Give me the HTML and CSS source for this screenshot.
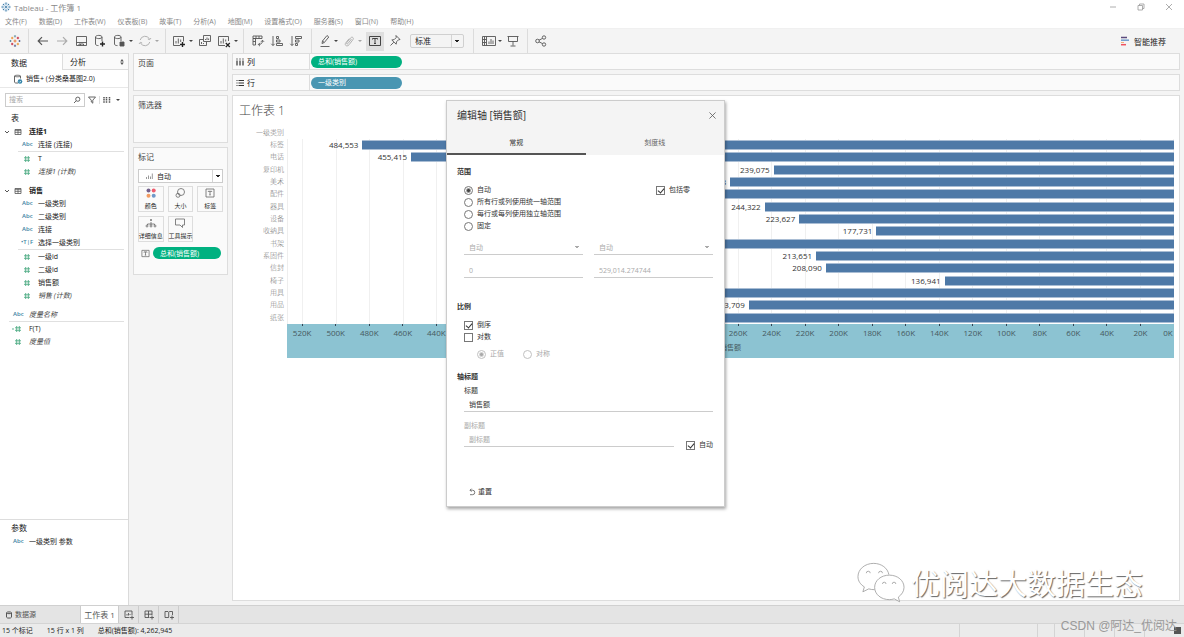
FILE: index.html
```html
<!DOCTYPE html>
<html lang="zh-CN">
<head>
<meta charset="utf-8">
<title>Tableau - 工作簿 1</title>
<link rel="stylesheet" href="styles.css">
</head>
<body>
<svg class="defs" aria-hidden="true">
  <symbol id="i-hash" viewBox="0 0 8 8"><path d="M2.7 1v6M5.3 1v6M1 2.8h6M1 5.3h6"/></symbol>
  <symbol id="i-table" viewBox="0 0 8 8"><path d="M1 1.5h6v5H1zM1 2.3h6M1 4.300h6M4 2v4.5" stroke-width=".8"/></symbol>
  <symbol id="i-chev" viewBox="0 0 8 8"><path d="M2 3l2 2 2-2"/></symbol>
  <symbol id="i-label" viewBox="0 0 10 10"><path d="M1 1.5h8v7H1zM3.3 4V3.2h3.4V4M5 3.2v3.6M4.2 6.8h1.6"/></symbol>
  <symbol id="i-cyl" viewBox="0 0 14 14"><path d="M2.5 3v7c0 1 1.2 1.6 3 1.6M9 3v4M2.500 3c0-1 1.500-1.600 3.300-1.600S9 2 9 3s-1.500 1.600-3.200 1.600S2.500 4 2.500 3z"/></symbol>
</svg>
<header class="titlebar">
  <svg class="ic10" viewBox="0 0 10 10"><circle cx="5" cy="5" r="4.500" fill="#dbe8f2"/><path d="M5 .5v2M5 7.500v2M.5 5h2M7.500 5h2M5 4v2M4 5h2M2 2l1.200 1.200M8 2L6.800 3.200M2 8l1.200-1.200M8 8L6.800 6.800" stroke="#3f7ca8" fill="none"/></svg>
  <h1>Tableau - 工作簿 1</h1>
  <div class="winbtns">
    <button aria-label="最小化"><svg viewBox="0 0 8 8"><path d="M1 4h6"/></svg></button>
    <button aria-label="还原"><svg viewBox="0 0 8 8"><path d="M1 2.500h4.500V7H1zM2.500 2.500V1H7v4.500H5.500"/></svg></button>
    <button aria-label="关闭"><svg viewBox="0 0 8 8"><path d="M1 1l6 6M7 1L1 7"/></svg></button>
  </div>
</header>
<nav class="menubar">
  <button>文件(F)</button><button>数据(D)</button><button>工作表(W)</button><button>仪表板(B)</button><button>故事(T)</button><button>分析(A)</button><button>地图(M)</button><button>设置格式(O)</button><button>服务器(S)</button><button>窗口(N)</button><button>帮助(H)</button>
</nav>
<div class="toolbar">
  <div class="group g1"><button class="tb" aria-label="开始页面"><svg viewBox="0 0 14 14"><path d="M7 5.500v3M5.500 7h3" stroke="#e8762c"/><path d="M7 1v2.500M5.900 2.200h2.200" stroke="#7199a6"/><path d="M7 10.500V13M5.900 11.800h2.200" stroke="#5b6591"/><path d="M1.500 7h2M2.500 6v2" stroke="#5b879b"/><path d="M10.500 7h2M11.500 6v2" stroke="#5b6591"/><path d="M3 4h2.400M4.200 2.800v2.400M8.700 10h2.400M9.900 8.800v2.400" stroke="#eb912c"/><path d="M8.700 4h2.400M9.900 2.800v2.400M3 10h2.400M4.200 8.800v2.400" stroke="#c72035"/></svg></button></div>
  <div class="group g2">
    <button class="tb" aria-label="撤消"><svg viewBox="0 0 14 14"><path d="M12 7H2.300M6 3.200L2.200 7 6 10.800" stroke-width="1.200"/></svg></button>
    <button class="tb off" aria-label="重做"><svg viewBox="0 0 14 14"><path d="M2 7h9.700M8 3.200L11.800 7 8 10.800" stroke-width="1.200"/></svg></button>
    <button class="tb" aria-label="保存"><svg viewBox="0 0 14 14"><path d="M2.500 2.500h10v9h-10zM2.500 8.500h10M5 11.500V10h4.500v1.500M6.500 10v1.500"/></svg></button>
    <button class="tb" aria-label="新建数据源"><svg viewBox="0 0 14 14"><use href="#i-cyl"/><path d="M9.500 7.500v5M7 10h5" stroke="#222" stroke-width="1.400"/></svg></button>
    <button class="tb" aria-label="暂停自动更新"><svg viewBox="0 0 14 14"><use href="#i-cyl"/><path d="M8 8h4v4H8z" fill="#555"/></svg></button>
    <button class="caret" aria-label="更多"></button>
    <button class="tb off" aria-label="运行更新"><svg viewBox="0 0 14 14"><path d="M2.200 6A5 5 0 0 1 11.500 5M11.800 8A5 5 0 0 1 2.500 9M13 4l-1.300 1.700L9.800 5M1 10l1.300-1.700L4.200 9"/></svg></button>
    <button class="caret off" aria-label="更多"></button>
  </div>
  <div class="group g3">
    <button class="tb" aria-label="新建工作表"><svg viewBox="0 0 14 14"><path d="M8 11.500H1.500v-9h10v5M4 9.500V7M6.300 9.500V4.500M8.700 8V5.500"/><path d="M10.500 8v5M8 10.500h5" stroke="#222" stroke-width="1.400"/></svg></button>
    <button class="caret" aria-label="更多"></button>
    <button class="tb" aria-label="复制"><svg viewBox="0 0 14 14"><path d="M5.500 1.500h7v6h-7zM5 5.500H1.500v6h7V8M3.500 10V8M5.500 10V9M7.500 6V5M9 6V3.500M10.600 6V4.500"/></svg></button>
    <button class="tb" aria-label="清除工作表"><svg viewBox="0 0 14 14"><path d="M8 11.500H1.500v-9h10v4.500M4 9.500V7M6.300 9.500V4.500M8.700 7.500V5.500"/><path d="M8.800 9l4 4M12.800 9l-4 4" stroke="#222" stroke-width="1.200"/></svg></button>
    <button class="caret" aria-label="更多"></button>
  </div>
  <div class="group g4">
    <button class="tb" aria-label="交换行和列"><svg viewBox="0 0 14 14"><path d="M2 2h9v2.500H2zM2 4.500h2.500V11H2zM5 2v2.500M8 2v2.500M2 7.500h2.500M11.500 6.500c0 2.800-1.500 4-4 4M9 8.800L7.300 10.500 9 12.200M10 7.800l1.500-1.600L13 7.800"/></svg></button>
    <button class="tb" aria-label="升序排序"><svg viewBox="0 0 14 14"><path d="M3 2v9.500M1.300 9.800L3 11.500l1.700-1.700M6.500 2.500h2v2h-2zM6.500 6h3.500v2H6.500zM6.500 9.500h6v2h-6z"/></svg></button>
    <button class="tb" aria-label="降序排序"><svg viewBox="0 0 14 14"><path d="M3 2v9.500M1.300 9.800L3 11.500l1.700-1.700M6.500 2.500h6v2h-6zM6.500 6h3.500v2H6.500zM6.500 9.500h2v2h-2z"/></svg></button>
  </div>
  <div class="group g5">
    <button class="tb" aria-label="突出显示"><svg viewBox="0 0 14 14"><path d="M4 9.500L4.500 7l4.500-5.500 1.800 1.500-4.500 5.500zM4.500 7l1.800 1.500M2.500 12.500h9"/></svg></button>
    <button class="caret" aria-label="更多"></button>
    <button class="tb off" aria-label="分组成员"><svg viewBox="0 0 14 14"><path d="M9.500 5L6 9.500c-.8 1-2 .2-1.300-.8L8.500 4c1.500-1.800 3.800-.2 2.400 1.700L7 10.800c-2 2.500-5 .3-3.200-2L7 4.800"/></svg></button>
    <button class="caret off" aria-label="更多"></button>
    <button class="tb on" aria-label="显示标记标签"><svg viewBox="0 0 14 14"><path d="M1.500 2.500h11v9h-11zM4.500 5.500v-1h5v1M7 4.500v5M6 9.500h2"/></svg></button>
    <button class="tb" aria-label="修复轴"><svg viewBox="0 0 14 14"><path d="M8 1.500l4 4-1.500.3-2 2-.3 2.400L3.800 6l2.400-.4 2-2zM5.800 8.200L2.500 11.500"/></svg></button>
    <select class="fit" aria-label="适合"><option>标准</option></select>
  </div>
  <div class="group g6">
    <button class="tb" aria-label="显示卡"><svg viewBox="0 0 14 14"><path d="M.5 2.500h13v9H.5zM.5 5.500h4M.5 8.500h4M4.500 2.500v9M2.500 2.500v9M7 10V7.500M9 10V5M11 10V6.500"/></svg></button>
    <button class="caret" aria-label="更多"></button>
    <button class="tb" aria-label="演示模式"><svg viewBox="0 0 14 14"><path d="M1.500 2.500h11M2.500 2.500v5h9v-5M7 7.500v4M4.500 12h5"/></svg></button>
  </div>
  <div class="group g7"><button class="tb" aria-label="共享"><svg viewBox="0 0 14 14"><circle cx="3.500" cy="7" r="1.800"/><circle cx="10" cy="3.500" r="1.700"/><circle cx="10" cy="10.500" r="1.700"/><path d="M5 6.200l3.500-1.800M5 7.800l3.500 1.800"/></svg></button></div>
  <button class="showme"><svg viewBox="0 0 10 10"><path d="M1 1.500h6" stroke="#5b4a7d" stroke-width="1.500"/><path d="M1 4.200h8" stroke="#6f9bcd" stroke-width="1.500"/><path d="M1 6.500h3" stroke="#f2b07c"/><path d="M1 8.700h5" stroke="#ef5360" stroke-width="1.500"/></svg>智能推荐</button>
</div>
<main class="workspace">
  <aside class="datapane">
    <div class="ptabs"><button class="ptab sel">数据</button><button class="ptab">分析<svg class="spin" viewBox="0 0 4 6"><path d="M2 0l1.800 2.400H.2zM2 6l1.800-2.400H.2z"/></svg></button></div>
    <button class="source"><svg class="ic10" viewBox="0 0 10 10"><path d="M5 9H3C2 9 1.500 8.500 1.500 8V2M7.500 2v2.500M1.500 2C1.500 1 7.500 1 7.500 2S1.500 3 1.500 2z" fill="none" stroke="#666"/><circle cx="7" cy="7.500" r="2.300" fill="#3183a8"/><path d="M6 7.500l.8.8 1.300-1.500" fill="none" stroke="#fff" stroke-width=".7"/></svg>销售+ (分类桑基图2.0)</button>
    <div class="searchrow">
      <label class="search"><input type="text" placeholder="搜索" aria-label="搜索"><svg viewBox="0 0 8 8"><circle cx="4.800" cy="3.200" r="2.100"/><path d="M3.300 4.700L1 7"/></svg></label>
      <button aria-label="筛选"><svg viewBox="0 0 8 8"><path d="M.5 1h7L4.800 4.200V7.200L3.300 6V4.200z"/></svg></button>
      <button class="viewbtn" aria-label="查看"><svg viewBox="0 0 8 8"><path d="M1 1v6M3.500 1v6M6.500 1v6" stroke-width="1.500" stroke-dasharray="1.500 .6"/></svg></button>
      <button class="caret" aria-label="更多"></button>
    </div>
    <div class="tree">
      <h2>表</h2>
      <div class="node top"><svg class="tw"><use href="#i-chev"/></svg><svg class="ti"><use href="#i-table"/></svg><b>连接1</b></div>
      <div class="node"><i class="abc">Abc</i>连接 (连接)</div>
      <hr>
      <div class="node"><svg class="hash"><use href="#i-hash"/></svg>T</div>
      <div class="node"><svg class="hash"><use href="#i-hash"/></svg><em>连接1 (计数)</em></div>
      <div class="node top next"><svg class="tw"><use href="#i-chev"/></svg><svg class="ti"><use href="#i-table"/></svg><b>销售</b></div>
      <div class="node"><i class="abc">Abc</i>一级类别</div>
      <div class="node"><i class="abc">Abc</i>二级类别</div>
      <div class="node"><i class="abc">Abc</i>连接</div>
      <div class="node"><i class="abc calc">•T|F</i>选择一级类别</div>
      <hr>
      <div class="node"><svg class="hash"><use href="#i-hash"/></svg>一级id</div>
      <div class="node"><svg class="hash"><use href="#i-hash"/></svg>二级id</div>
      <div class="node"><svg class="hash"><use href="#i-hash"/></svg>销售额</div>
      <div class="node"><svg class="hash"><use href="#i-hash"/></svg><em>销售 (计数)</em></div>
      <div class="node out next"><i class="abc">Abc</i><em>度量名称</em></div>
      <hr class="wide">
      <div class="node out"><svg class="hash" viewBox="0 0 8 8"><circle cx="-1" cy="4" r=".4"/><use href="#i-hash" width="8" height="8"/></svg>F(T)</div>
      <div class="node out"><svg class="hash"><use href="#i-hash"/></svg><em>度量值</em></div>
    </div>
    <div class="params"><h2>参数</h2><div class="node out"><i class="abc">Abc</i>一级类别 参数</div></div>
  </aside>
  <section class="cards">
    <div class="card pages"><h2>页面</h2></div>
    <div class="card filters"><h2>筛选器</h2></div>
    <div class="card marks"><h2>标记</h2>
      <div class="marktype"><svg viewBox="0 0 8 8"><path d="M1.500 7V5M3.500 7V3.500M5.500 7V4.500M7.300 7V1.500"/></svg><select aria-label="标记类型"><option>自动</option></select></div>
      <div class="markgrid">
        <button><svg viewBox="0 0 12 12"><circle cx="3.500" cy="3.500" r="2" fill="#73608c"/><circle cx="8.700" cy="3.500" r="2" fill="#ef5c6e"/><circle cx="3.500" cy="8.700" r="2" fill="#f39c62"/><circle cx="8.700" cy="8.700" r="2" fill="#6f98c8"/></svg>颜色</button>
        <button><svg class="ln" viewBox="0 0 12 12"><circle cx="7" cy="5" r="3.500"/><circle cx="4" cy="8.300" r="2"/></svg>大小</button>
        <button><svg class="ln" viewBox="0 0 12 12"><path d="M2 2h8v8H2zM4.300 5V4.300h3.400V5M6 4.300v3.600M5.300 7.900h1.400"/></svg>标签</button>
        <button><svg class="ln" viewBox="0 0 12 12"><circle cx="6" cy="3" r=".6" fill="#555"/><path d="M6 5v3M2.500 8V7h7v1"/><circle cx="2" cy="9" r="1"/><circle cx="6" cy="9" r="1"/><circle cx="10" cy="9" r="1"/></svg>详细信息</button>
        <button><svg class="ln" viewBox="0 0 12 12"><path d="M1.500 2h9v6H8.500v2.500L6 8H1.500z"/></svg>工具提示</button>
      </div>
      <div class="markpill"><svg class="ln" viewBox="0 0 10 10"><use href="#i-label"/></svg><button class="pill green">总和(销售额)</button></div>
    </div>
  </section>
  <section class="view">
    <div class="shelf"><span class="shelfname"><svg viewBox="0 0 8 8"><path d="M1 .5v1M4 .5v1M7 .5v1M1 2.500v5M4 2.500v5M7 2.500v5"/></svg>列</span><button class="pill green">总和(销售额)</button></div>
    <div class="shelf"><span class="shelfname"><svg viewBox="0 0 8 8"><path d="M.5 1.500h1M.5 4h1M.5 6.500h1M2.500 1.500h5.500M2.500 4h5.500M2.500 6.500h5.500"/></svg>行</span><button class="pill blue">一级类别</button></div>
    <div class="sheet">
      <h2>工作表 1</h2>
      <div class="chart">
        <div class="rowhead">一级类别</div>
        <div class="names"><span>标签</span><span>电话</span><span>复印机</span><span>美术</span><span>配件</span><span>器具</span><span>设备</span><span>收纳具</span><span>书架</span><span>系固件</span><span>信封</span><span>椅子</span><span>用具</span><span>用品</span><span>纸张</span></div>
        <div class="plot">
          <div class="bar"><span>484,553</span><i style="width:91.6%"></i></div>
          <div class="bar"><span>455,415</span><i style="width:86.1%"></i></div>
          <div class="bar"><span>239,075</span><i style="width:45.2%"></i></div>
          <div class="bar"><span>265,148</span><i style="width:50.1%"></i></div>
          <div class="bar"><i style="width:64%"></i></div>
          <div class="bar"><span>244,322</span><i style="width:46.2%"></i></div>
          <div class="bar"><span>223,627</span><i style="width:42.3%"></i></div>
          <div class="bar"><span>177,731</span><i style="width:33.6%"></i></div>
          <div class="bar"><i style="width:65%"></i></div>
          <div class="bar"><span>213,651</span><i style="width:40.4%"></i></div>
          <div class="bar"><span>208,090</span><i style="width:39.3%"></i></div>
          <div class="bar"><span>136,941</span><i style="width:25.9%"></i></div>
          <div class="bar"><i style="width:64%"></i></div>
          <div class="bar"><span>253,709</span><i style="width:48%"></i></div>
          <div class="bar"><i style="width:63%"></i></div>
        </div>
        <div class="axis">
          <div class="ticks"><span>520K</span><span>500K</span><span>480K</span><span>460K</span><span>440K</span><span></span><span></span><span></span><span></span><span></span><span></span><span></span><span></span><span>260K</span><span>240K</span><span>220K</span><span>200K</span><span>180K</span><span>160K</span><span>140K</span><span>120K</span><span>100K</span><span>80K</span><span>60K</span><span>40K</span><span>20K</span><span class="zero">0K</span></div>
          <div class="axistitle">销售额</div>
        </div>
      </div>
    </div>
  </section>
</main>
<nav class="sheettabs">
  <button class="dsrc"><svg class="ic8" viewBox="0 0 8 8"><path d="M1.500 1.800v4.400c0 1.200 5 1.200 5 0V1.800M1.500 1.800c0-1.200 5-1.200 5 0s-5 1.200-5 0z"/></svg>数据源</button>
  <button class="cur">工作表 1</button>
  <button class="add" aria-label="新建工作表"><svg viewBox="0 0 10 10"><path d="M5.500 7.500H1v-6.500h7v4M3 5.500V4M4.500 5.500V3M6 5V4M8 5.500v4M6 7.500h4"/></svg></button>
  <button class="add" aria-label="新建仪表板"><svg viewBox="0 0 10 10"><path d="M5.500 7.500H1v-6.500h7v4M1 4.200h7M4.500 1v6.500M8 5.500v4M6 7.500h4"/></svg></button>
  <button class="add" aria-label="新建故事"><svg viewBox="0 0 10 10"><path d="M5 8L4.500 7.500H1v-6H4l.7.8.8-.8H8.500V5M4.700 2.300v5M8 5.500v4M6 7.500h4"/></svg></button>
</nav>
<footer class="status"><span>15 个标记</span><span>15 行 x 1 列</span><span>总和(销售额): 4,262,945</span><div class="cells"><i></i><i></i><i></i><i></i><i></i><i></i><b></b></div></footer>

<form class="dialog" role="dialog" aria-labelledby="dlg-title">
  <div class="dhead">
    <div class="dtitle"><h2 id="dlg-title">编辑轴 [销售额]</h2><button type="button" aria-label="关闭"><svg viewBox="0 0 8 8"><path d="M.5.5l7 7M7.500.5l-7 7"/></svg></button></div>
    <div class="dtabs"><button type="button" class="sel">常规</button><button type="button">刻度线</button></div>
  </div>
  <div class="dbody">
    <h3>范围</h3>
    <div class="range">
      <div class="opts">
        <label><input type="radio" name="range" checked>自动</label>
        <label><input type="radio" name="range">所有行或列使用统一轴范围</label>
        <label><input type="radio" name="range">每行或每列使用独立轴范围</label>
        <label><input type="radio" name="range">固定</label>
      </div>
      <label class="zerochk"><input type="checkbox" checked>包括零</label>
    </div>
    <div class="pair">
      <select disabled aria-label="起始"><option>自动</option></select><select disabled aria-label="结束"><option>自动</option></select>
      <input type="text" disabled value="0" aria-label="起始值"><input type="text" disabled value="529,014.274744" aria-label="结束值">
    </div>
    <h3 class="scale">比例</h3>
    <div class="opts">
      <label><input type="checkbox" checked>倒序</label>
      <label><input type="checkbox">对数</label>
    </div>
    <div class="logopts"><label><input type="radio" name="log" checked disabled>正值</label><label><input type="radio" name="log" disabled>对称</label></div>
    <h3 class="axt">轴标题</h3>
    <div class="fields">
      <label for="t1">标题</label><input id="t1" type="text" value="销售额">
      <label for="t2" class="dim">副标题</label>
      <div class="sub"><input id="t2" type="text" placeholder="副标题"><label><input type="checkbox" checked>自动</label></div>
    </div>
    <button type="button" class="reset"><svg class="ic8" viewBox="0 0 8 8"><path d="M2 2.200h2.500a2.200 2.200 0 0 1 0 4.500H2M3.500.7L2 2.200l1.500 1.500"/></svg>重置</button>
  </div>
</form>
<div class="brandmark"><svg viewBox="0 0 50 42"><path d="M17 2C8 2 1 8 1 15.500c0 4.500 2.500 8 6.500 10.500L6 31l6-3c2 .6 4 .9 6 .8M17 2c8 0 14.500 5 15.500 11.500"/><path d="M33 14c-8.500 0-15 5.500-15 12.500S24.500 39 33 39c1.800 0 3.500-.3 5-.8l5.500 3-1.300-4.800C45.500 34 48 30.500 48 26.500 48 19.500 41.500 14 33 14z"/><path d="M9.500 12a2 2 0 0 1 4 0M22 12a2 2 0 0 1 4 0M26 23a1.800 1.800 0 0 1 3.600 0M36 23a1.800 1.800 0 0 1 3.600 0"/></svg><span>优阅达大数据生态</span></div>
<div class="credit">CSDN @阿达_优阅达</div>
</body>
</html>
```
FILE: styles.css
```css
* { box-sizing: border-box; }
body {
  margin: 0; height: 100vh; overflow: hidden; position: relative;
  display: flex; flex-direction: column;
  background: #f4f4f4; color: #222;
  font: 7px/13px "Open Sans", "Noto Sans CJK SC", sans-serif;
}
h1, h2, h3 { margin: 0; font-size: 8px; font-weight: 400; }
button, input, select { font: inherit; color: inherit; margin: 0; padding: 0; border: 0; background: none; border-radius: 0; outline: 0; }
button { display: flex; align-items: center; justify-content: center; white-space: nowrap; }
select { appearance: none; }
svg { display: block; flex: none; fill: none; stroke: #555; overflow: visible; }
.defs { position: absolute; width: 0; height: 0; }
.ic8 { width: 8px; height: 8px; }
.ic10 { width: 10px; height: 10px; stroke: none; }

.titlebar { display: flex; align-items: center; height: 14px; padding: 0 11px 0 1px; background: #fff; color: #888; gap: 3px; }
.winbtns { margin-left: auto; display: flex; gap: 20px; }
.winbtns svg { width: 8px; height: 8px; stroke: #999; stroke-width: .8; }
.menubar { display: flex; align-items: center; gap: 12px; height: 14px; padding-left: 5px; background: #fff; color: #888; }

.toolbar { display: flex; height: 25px; align-items: stretch; border-top: 1px solid #f0f0f0; }
.group { display: flex; align-items: center; border-right: 1px solid #dcdcdc; gap: 5px; }
.g1 { padding: 0 6px 0 8px; }
.g2 { padding: 0 6px 0 7px; }
.g3 { padding: 0 5px 0 6px; }
.g4 { padding: 0 8px 0 7px; }
.g5 { padding: 0 9px 0 6px; gap: 4px; }
.g6 { padding: 0 7px 0 8px; gap: 4px; }
.g7 { padding-left: 6px; border: 0; }
.tb { width: 14px; height: 19px; }
.tb svg { width: 14px; height: 14px; stroke-width: .9; }
.tb.off { opacity: .45; }
.tb.on { width: 18px; background: #dfdfdf; }
.tb.on svg { stroke: #333; }
.caret { width: 4px; margin-left: -2px; }
.caret::before { content: ""; border: 2px solid transparent; border-top-color: #444; border-bottom: 0; }
.caret.off { opacity: .45; }
.fit, .marktype select, .pair select {
  background: conic-gradient(from -45deg at 50% 100%, #555 90deg, transparent 0) right 4px center / 5px 3px no-repeat;
  background: conic-gradient(from 315deg at 50% 100%, currentColor 90deg, transparent 0) right 4px center / 5px 3px no-repeat;
}
.fit { width: 54px; height: 14px; margin-left: 4px; padding-left: 4px; border: 1px solid #d0d0d0; border-radius: 2px; font-size: 8px; line-height: 12px; }
.fit, .marktype select, .pair select {
  background:
    linear-gradient(to bottom left, currentColor 50%, transparent 50%) right 6px center / 2px 3px no-repeat,
    linear-gradient(to bottom right, currentColor 50%, transparent 50%) right 4px center / 2px 3px no-repeat,
    linear-gradient(#d4d4d4, #d4d4d4) right 11px center / 1px 100% no-repeat;
}
.showme { margin-left: auto; padding-right: 18px; gap: 4px; font-size: 8px; color: #222; }
.showme svg { width: 10px; height: 10px; }

.workspace { flex: 1; min-height: 0; display: flex; }
.datapane { width: 129px; flex: none; display: flex; flex-direction: column; background: #fff; border-right: 1px solid #dadada; }
.ptabs { display: flex; height: 17px; font-size: 8px; border-top: 1px solid #ddd; }
.ptab { flex: 1; justify-content: flex-start; padding-left: 7px; background: #fafafa; border: solid #ddd; border-width: 0 0 1px 1px; }
.ptab.sel { flex: 0 0 62px; padding-left: 11px; background: #fff; border: 0; }
.spin { margin: 0 4px 0 auto; width: 4px; height: 6px; fill: #555; stroke: none; }
.source { justify-content: flex-start; height: 18px; padding-left: 13px; gap: 3px; border-bottom: 1px solid #e8e8e8; }
.searchrow { display: flex; align-items: center; height: 23px; padding: 0 7px 0 5px; gap: 3px; }
.searchrow svg { width: 8px; height: 8px; stroke-width: .9; }
.search { display: flex; align-items: center; width: 80px; height: 14px; border: 1px solid #ccc; padding: 0 3px; }
.search input { flex: 1; min-width: 0; }
.searchrow .caret { margin-left: 2px; }
.viewbtn { border-left: 1px solid #ddd; padding-left: 3px; }
::placeholder { color: #aaa; opacity: 1; }
.tree h2 { height: 14px; padding-left: 11px; line-height: 14px; }
.node { display: flex; align-items: center; height: 13px; padding-left: 20px; white-space: nowrap; }
.node.top { padding-left: 3px; }
.node.out { padding-left: 11px; }
.node.next { margin-top: 6px; }
.tree hr { margin: 0 4px 0 18px; border: 0; height: 1px; background: #e0e0e0; }
.tree hr.wide { margin-left: 9px; }
.tw, .ti { width: 8px; height: 8px; }
.ti { margin: 0 7px 0 3px; }
.abc { width: 18px; font: 600 6px/13px "Open Sans", sans-serif; color: #3d84a3; padding-left: 2px; }
.abc.calc { padding-left: 1px; }
.hash { width: 8px; height: 8px; margin: 0 7px 0 3px; stroke: #4fab84; stroke-width: .9; }
.node em { color: #444; }
.params { margin-top: auto; height: 86px; border-top: 1px solid #ddd; }
.params h2 { height: 15px; padding-left: 11px; line-height: 15px; }

.cards { width: 103px; flex: none; padding: 0 4px 0 4px; display: flex; flex-direction: column; gap: 4px; }
.card { border: 1px solid #ddd; background: #fafafa; padding: 2px 4px; }
.card h2 { color: #444; }
.pages { height: 38px; }
.filters { height: 48px; }
.marks { height: 128px; }
.marktype { display: flex; align-items: center; height: 14px; margin-top: 6px; border: 1px solid #ccc; padding-left: 6px; gap: 4px; background: #fff; }
.marktype svg { width: 8px; height: 8px; stroke: #999; }
.marktype select { flex: 1; height: 12px; padding-left: 0; background-position: right 4px center, right 2px center, right 9px center; }
.markgrid { display: grid; grid-template-columns: repeat(3, 1fr); gap: 4px; margin-top: 3px; }
.markgrid button { flex-direction: column; height: 26px; border: 1px solid #ddd; font-size: 6px; line-height: 9px; gap: 3px; min-width: 0; }
.markgrid svg { width: 12px; height: 12px; stroke: none; }
.markgrid svg.ln { stroke: #666; stroke-width: .8; }
.markpill { display: flex; align-items: center; gap: 3px; margin-top: 5px; padding: 0 2px 0 3px; }
.markpill svg { width: 9px; height: 9px; stroke: #666; stroke-width: .8; }
.pill { justify-content: flex-start; height: 12px; border-radius: 6px; padding: 0 7px; color: #fff; width: 91px; }
.markpill .pill { width: auto; flex: 1; }
.green { background: #00b180; }
.blue { background: #4996b2; }

.view { flex: 1; min-width: 0; display: flex; flex-direction: column; gap: 4px; padding: 0 4px 4px 0; }
.shelf { display: flex; align-items: center; gap: 1px; height: 17px; flex: none; border: 1px solid #ddd; background: #fafafa; }
.shelfname { display: flex; align-items: center; gap: 3px; width: 77px; height: 15px; padding-left: 3px; border-right: 1px solid #ddd; font-size: 8px; }
.shelfname svg { width: 8px; height: 8px; stroke: #333; stroke-width: 1.200; }
.sheet { flex: 1; border: 1px solid #ddd; background: #fff; padding-right: 5px; }
.sheet h2 { padding: 6px 0 0 6px; font: 300 12px/18px "Open Sans", "Noto Sans CJK SC", sans-serif; height: 31px; color: #444; }
.chart { display: grid; grid-template-columns: 54px 1fr; grid-template-rows: 12px 185px 34px; }
.rowhead, .names { color: #777; text-align: right; padding-right: 3px; font-weight: 300; }
.rowhead { grid-column: 1; line-height: 12px; }
.names { grid-column: 1; display: grid; grid-auto-rows: 1fr; line-height: 12px; }
.plot { grid-column: 2; display: grid; grid-auto-rows: 1fr; border-left: 1px solid #eee;
  background: repeating-linear-gradient(to left, #f0f0f0 0 1px, transparent 1px 3.781%); }
.bar { display: flex; justify-content: flex-end; align-items: center; gap: 4px; font: 8px/12px "Open Sans", sans-serif; color: #333; }
.bar i { height: 10px; flex: none; background: #4e79a7; border: solid #a9bdd4; border-width: 1px 0; background-clip: padding-box; }
.axis { grid-column: 2; background: #8cc3d2; color: #46595f; overflow: hidden; }
.ticks { display: grid; grid-template-columns: repeat(27, 3.711%); justify-content: end; font-size: 8px; line-height: 12px; margin-right: -1.890%; }
.ticks span { text-align: center; }
.ticks span::before { content: ""; display: block; width: 1px; height: 2px; margin: 0 auto 1px; background: #345; }
.ticks .zero { padding-right: 12px; }
.ticks .zero::before { margin-right: 4px; }
.axistitle { text-align: center; line-height: 17px; }

.sheettabs { display: flex; height: 18px; flex: none; border-top: 1px solid #d0d0d0; background: #e4e4e4; color: #555; font-size: 8px; }
.sheettabs button { border-right: 1px solid #ccc; }
.sheettabs .dsrc { width: 81px; justify-content: flex-start; padding-left: 5px; gap: 2px; font-size: 7px; }
.cur { width: 38px; background: #fff; }
.add { width: 20px; }
.add svg { width: 10px; height: 10px; stroke-width: .9; }
.status { display: flex; align-items: center; height: 14px; flex: none; padding-left: 2px; gap: 14px; border-top: 1px solid #d4d4d4; background: #ebebeb; }
.cells { display: flex; align-items: center; margin-left: auto; padding-right: 3px; }
.cells i { width: 30px; height: 13px; border-left: 1px solid #d4d4d4; }
.cells i:first-child { width: 78px; }
.cells i:nth-child(2) { width: 17px; }
.cells b { width: 7px; height: 7px; background: #555; }

.dialog { position: absolute; left: 446px; top: 100px; width: 279px; height: 407px; background: #fff; border: 1px solid #ccc; box-shadow: 1px 2px 3px rgba(0, 0, 0, .35); color: #333; }
.dhead { background: #f4f4f4; }
.dtitle { display: flex; align-items: center; justify-content: space-between; height: 28px; padding: 0 8px 0 10px; }
.dtitle h2 { font-size: 10px; }
.dtitle svg { width: 7px; height: 7px; stroke-width: .9; }
.dtabs { display: grid; grid-template-columns: 1fr 1fr; height: 26px; color: #666; }
.dtabs .sel { border-bottom: 2px solid #555; padding-top: 2px; color: #333; }
.dbody { padding: 10px 11px 0 10px; }
.dbody h3 { font-size: 7px; font-weight: 700; line-height: 14px; }
.range { display: flex; justify-content: space-between; padding: 5px 23px 0 7px; }
.opts { display: grid; grid-auto-rows: 12px; }
.dialog label { display: flex; align-items: center; gap: 4px; height: 12px; line-height: 12px; }
.dialog [type=radio], .dialog [type=checkbox] { appearance: none; width: 9px; height: 9px; border: 1px solid #777; background: #fff; flex: none; }
.dialog [type=radio] { border-radius: 50%; }
.dialog [type=radio]:checked { background: radial-gradient(#444 1px, #fff 3px); }
.dialog [type=checkbox]:checked::before { content: ""; display: block; width: 3px; height: 5px; margin: 0 0 0 2px; border: solid #333; border-width: 0 1px 1px 0; transform: rotate(40deg); }
.pair { display: grid; grid-template-columns: 1fr 1fr; column-gap: 11px; row-gap: 8px; padding: 8px 0 0 7px; }
.pair select, .pair > input { width: 100%; min-width: 0; height: 15px; border-bottom: 1px solid #ccc; color: #aaa; padding-left: 5px; opacity: 1; }
.pair select { background-size: 2px 3px, 2px 3px, 0 0; }
.dbody .scale { margin-top: 22px; }
.scale + .opts { padding: 5px 0 0 7px; grid-auto-rows: 12px; }
.logopts { display: flex; gap: 19px; padding: 5px 0 0 20px; color: #aaa; }
.dialog .logopts [type=radio] { opacity: .45; }
.dbody .axt { margin-top: 10px; }
.fields { padding-left: 7px; }
.fields > label { height: 13px; }
.fields > input { display: block; width: 100%; height: 15px; padding-left: 5px; border-bottom: 1px solid #ccc; }
.dialog .dim { color: #aaa; margin-top: 7px; }
.sub { display: flex; align-items: flex-end; gap: 12px; }
.sub > input { flex: 1; min-width: 0; height: 15px; padding-left: 5px; border-bottom: 1px solid #ccc; }
.dialog .sub label { margin-bottom: -4px; }
.reset { margin: 38px 0 0 11px; gap: 2px; }
.reset svg { stroke-width: .8; }

.brandmark { position: absolute; right: 41px; bottom: 34px; display: flex; align-items: center; gap: 5px; color: #fff; font: 29px/40px "Noto Sans CJK SC", sans-serif; text-shadow: 1px 1px 1px #666; }
.brandmark svg { width: 49px; height: 42px; stroke: #999; stroke-width: .8; }
.brandmark svg path { fill: #fff; }
.credit { position: absolute; right: 7px; bottom: 3px; font: 12px/16px "Liberation Sans", "Noto Sans CJK SC", sans-serif; color: #999; }
```
